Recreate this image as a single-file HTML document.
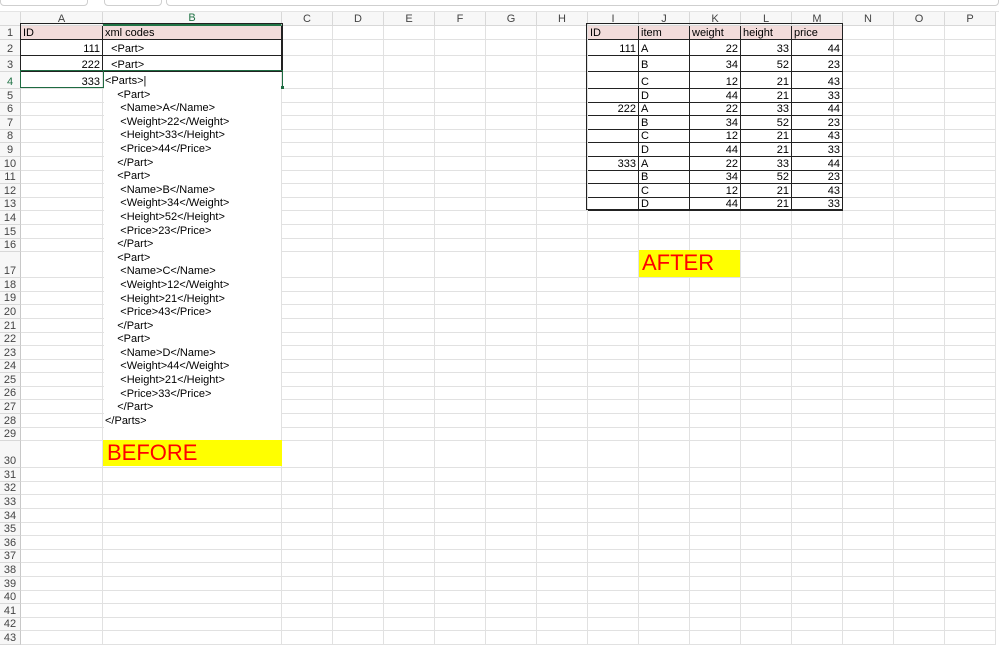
<!DOCTYPE html>
<html><head><meta charset="utf-8">
<style>
*{box-sizing:border-box;margin:0;padding:0}
body{width:999px;height:637px;overflow:hidden;background:#fff;font-family:"Liberation Sans",Arial,sans-serif;font-size:11px;color:#000;position:relative}
.top{position:absolute;left:0;top:0;width:999px;height:12px;background:#fff;border-bottom:1px solid #e4e4e4}
.top div{position:absolute;top:-6px;height:12px;border:1px solid #cfcfcf;border-radius:4px;background:#fff}
table{position:absolute;left:0;top:12px;border-collapse:separate;border-spacing:0;table-layout:fixed;width:996px}
td{border-right:1px solid #e1e1e1;border-bottom:1px solid #e1e1e1;padding:0 2px;white-space:nowrap;overflow:hidden;line-height:12px;vertical-align:bottom}
tr.h td{background:#f7f7f7;color:#444;text-align:center;border-color:#d8d8d8;vertical-align:middle;font-size:11px}
td.rh{background:#f7f7f7;color:#444;text-align:center;border-right:1px solid #c8c8c8;border-bottom-color:#d8d8d8;font-size:11px;padding:0}
.p{background:#f2dcdb}
.r{text-align:right}
.d{border-right-color:#222;border-bottom-color:#222}
.box{position:absolute;border:1px solid #222}
pre{position:absolute;left:104px;top:74px;width:177px;height:365px;background:#fff;font-family:"Liberation Sans",Arial,sans-serif;font-size:11px;line-height:13.6px;padding-left:1px;padding-top:1px}
.y{position:absolute;background:#ffff00;color:#ff0000;font-size:22px;line-height:26px}
</style></head><body>
<div class="top"><div style="left:0;width:88px"></div><div style="left:104px;width:58px"></div><div style="left:166px;width:833px"></div></div>
<table>
<colgroup><col style="width:21px"><col style="width:82px"><col style="width:179px"><col style="width:51px"><col style="width:51px"><col style="width:51px"><col style="width:51px"><col style="width:51px"><col style="width:51px"><col style="width:51px"><col style="width:51px"><col style="width:51px"><col style="width:51px"><col style="width:51px"><col style="width:51px"><col style="width:51px"><col style="width:51px"></colgroup>
<tr class="h" style="height:12px"><td></td><td>A</td><td style="color:#217346;border-bottom:2px solid #217346">B</td><td>C</td><td>D</td><td>E</td><td>F</td><td>G</td><td>H</td><td>I</td><td>J</td><td>K</td><td>L</td><td>M</td><td>N</td><td>O</td><td>P</td></tr>
<tr style="height:14px"><td class="rh">1</td><td class="p d">ID</td><td class="p d">xml codes</td><td></td><td></td><td></td><td></td><td></td><td></td><td class="p d">ID</td><td class="p d">item</td><td class="p d">weight</td><td class="p d">height</td><td class="p d">price</td><td></td><td></td><td></td></tr>
<tr style="height:16px"><td class="rh">2</td><td class="r d">111</td><td class="d">&nbsp;&nbsp;&lt;Part&gt;</td><td></td><td></td><td></td><td></td><td></td><td></td><td class="r d">111</td><td class="d">A</td><td class="r d">22</td><td class="r d">33</td><td class="r d">44</td><td></td><td></td><td></td></tr>
<tr style="height:16px"><td class="rh">3</td><td class="r d">222</td><td class="d">&nbsp;&nbsp;&lt;Part&gt;</td><td></td><td></td><td></td><td></td><td></td><td></td><td class="d"></td><td class="d">B</td><td class="r d">34</td><td class="r d">52</td><td class="r d">23</td><td></td><td></td><td></td></tr>
<tr style="height:17px"><td class="rh" style="color:#217346">4</td><td class="r">333</td><td></td><td></td><td></td><td></td><td></td><td></td><td></td><td class="d"></td><td class="d">C</td><td class="r d">12</td><td class="r d">21</td><td class="r d">43</td><td></td><td></td><td></td></tr>
<tr style="height:13.6px"><td class="rh">5</td><td></td><td></td><td></td><td></td><td></td><td></td><td></td><td></td><td class="d"></td><td class="d">D</td><td class="r d">44</td><td class="r d">21</td><td class="r d">33</td><td></td><td></td><td></td></tr>
<tr style="height:13.6px"><td class="rh">6</td><td></td><td></td><td></td><td></td><td></td><td></td><td></td><td></td><td class="r d">222</td><td class="d">A</td><td class="r d">22</td><td class="r d">33</td><td class="r d">44</td><td></td><td></td><td></td></tr>
<tr style="height:13.6px"><td class="rh">7</td><td></td><td></td><td></td><td></td><td></td><td></td><td></td><td></td><td class="d"></td><td class="d">B</td><td class="r d">34</td><td class="r d">52</td><td class="r d">23</td><td></td><td></td><td></td></tr>
<tr style="height:13.6px"><td class="rh">8</td><td></td><td></td><td></td><td></td><td></td><td></td><td></td><td></td><td class="d"></td><td class="d">C</td><td class="r d">12</td><td class="r d">21</td><td class="r d">43</td><td></td><td></td><td></td></tr>
<tr style="height:13.6px"><td class="rh">9</td><td></td><td></td><td></td><td></td><td></td><td></td><td></td><td></td><td class="d"></td><td class="d">D</td><td class="r d">44</td><td class="r d">21</td><td class="r d">33</td><td></td><td></td><td></td></tr>
<tr style="height:13.6px"><td class="rh">10</td><td></td><td></td><td></td><td></td><td></td><td></td><td></td><td></td><td class="r d">333</td><td class="d">A</td><td class="r d">22</td><td class="r d">33</td><td class="r d">44</td><td></td><td></td><td></td></tr>
<tr style="height:13.6px"><td class="rh">11</td><td></td><td></td><td></td><td></td><td></td><td></td><td></td><td></td><td class="d"></td><td class="d">B</td><td class="r d">34</td><td class="r d">52</td><td class="r d">23</td><td></td><td></td><td></td></tr>
<tr style="height:13.6px"><td class="rh">12</td><td></td><td></td><td></td><td></td><td></td><td></td><td></td><td></td><td class="d"></td><td class="d">C</td><td class="r d">12</td><td class="r d">21</td><td class="r d">43</td><td></td><td></td><td></td></tr>
<tr style="height:13.6px"><td class="rh">13</td><td></td><td></td><td></td><td></td><td></td><td></td><td></td><td></td><td class="d"></td><td class="d">D</td><td class="r d">44</td><td class="r d">21</td><td class="r d">33</td><td></td><td></td><td></td></tr>
<tr style="height:13.6px"><td class="rh">14</td><td></td><td></td><td></td><td></td><td></td><td></td><td></td><td></td><td></td><td></td><td></td><td></td><td></td><td></td><td></td><td></td></tr>
<tr style="height:13.6px"><td class="rh">15</td><td></td><td></td><td></td><td></td><td></td><td></td><td></td><td></td><td></td><td></td><td></td><td></td><td></td><td></td><td></td><td></td></tr>
<tr style="height:13.6px"><td class="rh">16</td><td></td><td></td><td></td><td></td><td></td><td></td><td></td><td></td><td></td><td></td><td></td><td></td><td></td><td></td><td></td><td></td></tr>
<tr style="height:26px"><td class="rh">17</td><td></td><td></td><td></td><td></td><td></td><td></td><td></td><td></td><td></td><td></td><td></td><td></td><td></td><td></td><td></td><td></td></tr>
<tr style="height:13.6px"><td class="rh">18</td><td></td><td></td><td></td><td></td><td></td><td></td><td></td><td></td><td></td><td></td><td></td><td></td><td></td><td></td><td></td><td></td></tr>
<tr style="height:13.6px"><td class="rh">19</td><td></td><td></td><td></td><td></td><td></td><td></td><td></td><td></td><td></td><td></td><td></td><td></td><td></td><td></td><td></td><td></td></tr>
<tr style="height:13.6px"><td class="rh">20</td><td></td><td></td><td></td><td></td><td></td><td></td><td></td><td></td><td></td><td></td><td></td><td></td><td></td><td></td><td></td><td></td></tr>
<tr style="height:13.6px"><td class="rh">21</td><td></td><td></td><td></td><td></td><td></td><td></td><td></td><td></td><td></td><td></td><td></td><td></td><td></td><td></td><td></td><td></td></tr>
<tr style="height:13.6px"><td class="rh">22</td><td></td><td></td><td></td><td></td><td></td><td></td><td></td><td></td><td></td><td></td><td></td><td></td><td></td><td></td><td></td><td></td></tr>
<tr style="height:13.6px"><td class="rh">23</td><td></td><td></td><td></td><td></td><td></td><td></td><td></td><td></td><td></td><td></td><td></td><td></td><td></td><td></td><td></td><td></td></tr>
<tr style="height:13.6px"><td class="rh">24</td><td></td><td></td><td></td><td></td><td></td><td></td><td></td><td></td><td></td><td></td><td></td><td></td><td></td><td></td><td></td><td></td></tr>
<tr style="height:13.6px"><td class="rh">25</td><td></td><td></td><td></td><td></td><td></td><td></td><td></td><td></td><td></td><td></td><td></td><td></td><td></td><td></td><td></td><td></td></tr>
<tr style="height:13.6px"><td class="rh">26</td><td></td><td></td><td></td><td></td><td></td><td></td><td></td><td></td><td></td><td></td><td></td><td></td><td></td><td></td><td></td><td></td></tr>
<tr style="height:13.6px"><td class="rh">27</td><td></td><td></td><td></td><td></td><td></td><td></td><td></td><td></td><td></td><td></td><td></td><td></td><td></td><td></td><td></td><td></td></tr>
<tr style="height:13.6px"><td class="rh">28</td><td></td><td></td><td></td><td></td><td></td><td></td><td></td><td></td><td></td><td></td><td></td><td></td><td></td><td></td><td></td><td></td></tr>
<tr style="height:13.6px"><td class="rh">29</td><td></td><td></td><td></td><td></td><td></td><td></td><td></td><td></td><td></td><td></td><td></td><td></td><td></td><td></td><td></td><td></td></tr>
<tr style="height:27px"><td class="rh">30</td><td></td><td></td><td></td><td></td><td></td><td></td><td></td><td></td><td></td><td></td><td></td><td></td><td></td><td></td><td></td><td></td></tr>
<tr style="height:13.6px"><td class="rh">31</td><td></td><td></td><td></td><td></td><td></td><td></td><td></td><td></td><td></td><td></td><td></td><td></td><td></td><td></td><td></td><td></td></tr>
<tr style="height:13.6px"><td class="rh">32</td><td></td><td></td><td></td><td></td><td></td><td></td><td></td><td></td><td></td><td></td><td></td><td></td><td></td><td></td><td></td><td></td></tr>
<tr style="height:13.6px"><td class="rh">33</td><td></td><td></td><td></td><td></td><td></td><td></td><td></td><td></td><td></td><td></td><td></td><td></td><td></td><td></td><td></td><td></td></tr>
<tr style="height:13.6px"><td class="rh">34</td><td></td><td></td><td></td><td></td><td></td><td></td><td></td><td></td><td></td><td></td><td></td><td></td><td></td><td></td><td></td><td></td></tr>
<tr style="height:13.6px"><td class="rh">35</td><td></td><td></td><td></td><td></td><td></td><td></td><td></td><td></td><td></td><td></td><td></td><td></td><td></td><td></td><td></td><td></td></tr>
<tr style="height:13.6px"><td class="rh">36</td><td></td><td></td><td></td><td></td><td></td><td></td><td></td><td></td><td></td><td></td><td></td><td></td><td></td><td></td><td></td><td></td></tr>
<tr style="height:13.6px"><td class="rh">37</td><td></td><td></td><td></td><td></td><td></td><td></td><td></td><td></td><td></td><td></td><td></td><td></td><td></td><td></td><td></td><td></td></tr>
<tr style="height:13.6px"><td class="rh">38</td><td></td><td></td><td></td><td></td><td></td><td></td><td></td><td></td><td></td><td></td><td></td><td></td><td></td><td></td><td></td><td></td></tr>
<tr style="height:13.6px"><td class="rh">39</td><td></td><td></td><td></td><td></td><td></td><td></td><td></td><td></td><td></td><td></td><td></td><td></td><td></td><td></td><td></td><td></td></tr>
<tr style="height:13.6px"><td class="rh">40</td><td></td><td></td><td></td><td></td><td></td><td></td><td></td><td></td><td></td><td></td><td></td><td></td><td></td><td></td><td></td><td></td></tr>
<tr style="height:13.6px"><td class="rh">41</td><td></td><td></td><td></td><td></td><td></td><td></td><td></td><td></td><td></td><td></td><td></td><td></td><td></td><td></td><td></td><td></td></tr>
<tr style="height:13.6px"><td class="rh">42</td><td></td><td></td><td></td><td></td><td></td><td></td><td></td><td></td><td></td><td></td><td></td><td></td><td></td><td></td><td></td><td></td></tr>
<tr style="height:13.6px"><td class="rh">43</td><td></td><td></td><td></td><td></td><td></td><td></td><td></td><td></td><td></td><td></td><td></td><td></td><td></td><td></td><td></td><td></td></tr>
</table>
<div class="box" style="left:20px;top:23px;width:263px;height:48px;border-top-color:#222"></div>
<div class="box" style="left:586px;top:23px;width:257px;height:187px"></div>
<pre>&lt;Parts&gt;|
    &lt;Part&gt;
     &lt;Name&gt;A&lt;/Name&gt;
     &lt;Weight&gt;22&lt;/Weight&gt;
     &lt;Height&gt;33&lt;/Height&gt;
     &lt;Price&gt;44&lt;/Price&gt;
    &lt;/Part&gt;
    &lt;Part&gt;
     &lt;Name&gt;B&lt;/Name&gt;
     &lt;Weight&gt;34&lt;/Weight&gt;
     &lt;Height&gt;52&lt;/Height&gt;
     &lt;Price&gt;23&lt;/Price&gt;
    &lt;/Part&gt;
    &lt;Part&gt;
     &lt;Name&gt;C&lt;/Name&gt;
     &lt;Weight&gt;12&lt;/Weight&gt;
     &lt;Height&gt;21&lt;/Height&gt;
     &lt;Price&gt;43&lt;/Price&gt;
    &lt;/Part&gt;
    &lt;Part&gt;
     &lt;Name&gt;D&lt;/Name&gt;
     &lt;Weight&gt;44&lt;/Weight&gt;
     &lt;Height&gt;21&lt;/Height&gt;
     &lt;Price&gt;33&lt;/Price&gt;
    &lt;/Part&gt;
&lt;/Parts&gt;</pre>
<div style="position:absolute;left:20px;top:70px;width:84px;height:18px;border:1px solid #1e6b41"></div>
<div style="position:absolute;left:103px;top:70px;width:180px;height:18px;border:1px solid #1e6b41;border-bottom:none"></div>
<div style="position:absolute;left:281px;top:86px;width:3px;height:3px;background:#1e6b41"></div>
<div class="y" style="left:103px;top:440px;width:179px;height:26px;padding-left:4px">BEFORE</div>
<div class="y" style="left:639px;top:250px;width:101px;height:27px;padding-left:3px">AFTER</div>
</body></html>
